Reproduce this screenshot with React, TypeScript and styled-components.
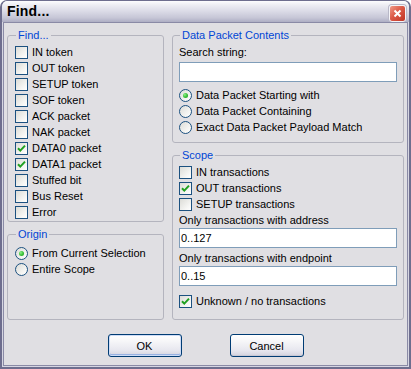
import React from 'react';
import styled, { createGlobalStyle } from 'styled-components';

const GlobalStyle = createGlobalStyle`
  html, body {
    margin: 0;
    padding: 0;
    background: #ffffff;
  }
  body {
    font-family: "Liberation Sans", Arial, sans-serif;
    font-size: 11px;
    color: #000;
  }
`;

const Window = styled.div`
  width: 411px;
  height: 369px;
  box-sizing: border-box;
  display: flex;
  flex-direction: column;
  border: 2px solid #6e6e8e;
  border-top-width: 1px;
  border-radius: 7px 7px 0 0;
  background: #d6d6e2;
  overflow: hidden;
`;

const TitleBar = styled.div`
  height: 21px;
  flex: none;
  display: flex;
  align-items: flex-start;
  padding: 0 3px 0 5px;
  background: linear-gradient(#fdfdfe 0%, #eeeef4 18%, #dadae6 50%, #c6c6d6 80%, #aeaec4 100%);
`;

const Title = styled.span`
  font-family: "Liberation Sans", Arial, sans-serif;
  font-weight: bold;
  font-size: 14px;
  line-height: 21px;
  letter-spacing: 0.2px;
`;

const CloseButton = styled.div`
  margin-left: auto;
  margin-top: 4px;
  width: 15px;
  height: 15px;
  border: 1px solid #f4f4f8;
  border-radius: 3px;
  background: linear-gradient(135deg, #f09a88 0%, #dc5a48 45%, #c03424 100%);
  box-shadow: 0 0 0 1px #b8b8c8;
  display: flex;
  align-items: center;
  justify-content: center;
`;

const Body = styled.div`
  flex: 1;
  margin: 0 1px 1px;
  border: 1px solid #8a8aa6;
  background: #e0dfe3;
  display: flex;
  flex-direction: column;
  padding: 6px 3px 8px;
  min-height: 0;
`;

const Columns = styled.div`
  flex: 1;
  display: flex;
  gap: 8px;
  min-height: 0;
`;

const Column = styled.div<{ $width: number }>`
  width: ${p => p.$width}px;
  flex: none;
  display: flex;
  flex-direction: column;
  gap: 6px;
`;

const Group = styled.fieldset<{ $grow?: boolean; $pad: string }>`
  margin: 0;
  min-width: 0;
  border: 1px solid #b4b4be;
  border-radius: 3px;
  padding: ${p => p.$pad};
  flex: ${p => (p.$grow ? 1 : 'none')};
`;

const Legend = styled.legend`
  color: #0046d5;
  padding: 0 2px;
  margin-left: 1px;
  line-height: 13px;
`;

const Row = styled.label`
  display: flex;
  align-items: center;
  height: 16px;
  line-height: 16px;
  white-space: nowrap;
`;

const Box = styled.span`
  width: 11px;
  height: 11px;
  flex: none;
  margin-right: 4px;
  border: 1px solid #1c5180;
  background: linear-gradient(135deg, #dcdcd7 0%, #f6f6f4 70%, #ffffff 100%);
  display: flex;
  align-items: center;
  justify-content: center;
`;

const Round = styled(Box)`
  border-radius: 50%;
`;

const Dot = styled.span`
  width: 5px;
  height: 5px;
  border-radius: 50%;
  background: radial-gradient(circle at 35% 35%, #8ef08a 0%, #3cc23a 50%, #1c9a1c 100%);
`;

const Caption = styled.div<{ $top?: number }>`
  height: 16px;
  line-height: 16px;
  margin-top: ${p => p.$top ?? 0}px;
  white-space: nowrap;
`;

const TextBox = styled.input`
  display: block;
  width: 100%;
  height: 20px;
  box-sizing: border-box;
  margin: 0;
  border: 1px solid #7f9db9;
  background: #fff;
  padding: 0 1px;
  font: inherit;
  color: #000;
  outline: none;
`;

const Stack = styled.div<{ $top?: number }>`
  margin-top: ${p => p.$top ?? 0}px;
`;

const ButtonRow = styled.div`
  flex: none;
  display: flex;
  justify-content: center;
  gap: 48px;
  margin-top: 14px;
`;

const Button = styled.button<{ $default?: boolean }>`
  width: 74px;
  height: 23px;
  margin: 0;
  padding: 0;
  border: 1px solid #003c74;
  border-radius: 3px;
  font: inherit;
  color: #000;
  background: linear-gradient(#ffffff 0%, #f6f6f8 30%, #e6e6ee 75%, #d2d2de 100%);
  box-shadow: ${p =>
    p.$default
      ? 'inset 0 0 0 1px #cedcf6, inset 0 -1px 0 1px #98b2e2'
      : 'inset 0 -1px 0 0 #c8c8d4'};
`;

const Check = () => (
  <svg width="9" height="9" viewBox="0 0 9 9">
    <path d="M1 4.2 L3.3 6.6 L8 1.6" fill="none" stroke="#21a121" strokeWidth="2" />
  </svg>
);

const CheckBox = ({ label, checked }: { label: string; checked?: boolean }) => (
  <Row>
    <Box>{checked && <Check />}</Box>
    {label}
  </Row>
);

const Radio = ({ label, checked }: { label: string; checked?: boolean }) => (
  <Row>
    <Round>{checked && <Dot />}</Round>
    {label}
  </Row>
);

const findItems: [string, boolean][] = [
  ['IN token', false],
  ['OUT token', false],
  ['SETUP token', false],
  ['SOF token', false],
  ['ACK packet', false],
  ['NAK packet', false],
  ['DATA0 packet', true],
  ['DATA1 packet', true],
  ['Stuffed bit', false],
  ['Bus Reset', false],
  ['Error', false],
];

export default function App() {
  return (
    <>
      <GlobalStyle />
      <Window>
        <TitleBar>
          <Title>Find...</Title>
          <CloseButton>
            <svg width="9" height="9" viewBox="0 0 9 9">
              <path d="M1.5 1.5 L7.5 7.5 M7.5 1.5 L1.5 7.5" stroke="#ffffff" strokeWidth="2" />
            </svg>
          </CloseButton>
        </TitleBar>
        <Body>
          <Columns>
            <Column $width={157}>
              <Group $pad="2px 7px 1px">
                <Legend>Find...</Legend>
                {findItems.map(([label, checked]) => (
                  <CheckBox key={label} label={label} checked={checked} />
                ))}
              </Group>
              <Group $grow $pad="4px 7px 4px">
                <Legend>Origin</Legend>
                <Radio label="From Current Selection" checked />
                <Radio label="Entire Scope" />
              </Group>
            </Column>
            <Column $width={232}>
              <Group $pad="2px 6px 7px">
                <Legend>Data Packet Contents</Legend>
                <Caption>Search string:</Caption>
                <Stack $top={2}>
                  <TextBox defaultValue="" />
                </Stack>
                <Stack $top={5}>
                  <Radio label="Data Packet Starting with" checked />
                  <Radio label="Data Packet Containing" />
                  <Radio label="Exact Data Packet Payload Match" />
                </Stack>
              </Group>
              <Group $grow $pad="2px 6px 4px">
                <Legend>Scope</Legend>
                <CheckBox label="IN transactions" />
                <CheckBox label="OUT transactions" checked />
                <CheckBox label="SETUP transactions" />
                <Caption>Only transactions with address</Caption>
                <TextBox defaultValue="0..127" />
                <Caption $top={2}>Only transactions with endpoint</Caption>
                <TextBox defaultValue="0..15" />
                <Stack $top={7}>
                  <CheckBox label="Unknown / no transactions" checked />
                </Stack>
              </Group>
            </Column>
          </Columns>
          <ButtonRow>
            <Button $default>OK</Button>
            <Button>Cancel</Button>
          </ButtonRow>
        </Body>
      </Window>
    </>
  );
}
